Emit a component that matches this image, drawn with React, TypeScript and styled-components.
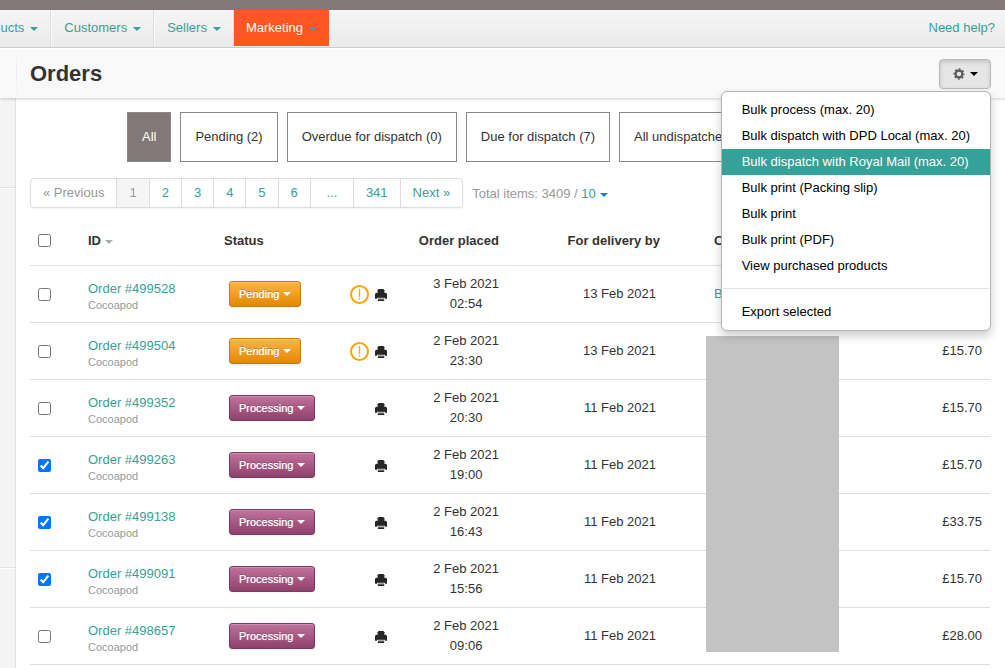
import React, { useState } from 'react';
import styled, { createGlobalStyle, css } from 'styled-components';

const teal = '#36a198';
const ink = '#333333';
const muted = '#999999';
const line = '#dddddd';

const GlobalStyle = createGlobalStyle`
  *, *::before, *::after { box-sizing: border-box; }
  body {
    margin: 0;
    background: #ffffff;
    color: ${ink};
    font-family: "Liberation Sans", Arial, sans-serif;
    font-size: 13px;
    line-height: 20px;
  }
  button { font: inherit; cursor: pointer; }
  a { color: ${teal}; text-decoration: none; }
`;

const Page = styled.div`
  display: flex;
  flex-direction: column;
  min-height: 100vh;
  overflow: hidden;
`;

const TopStrip = styled.div`
  height: 10px;
  background: #827878;
`;

const NavBar = styled.nav`
  display: flex;
  justify-content: space-between;
  height: 38px;
  border-bottom: 1px solid #d4d4d4;
  background: linear-gradient(#f5f5f5, #ebebeb);
`;

const NavList = styled.ul`
  display: flex;
  margin: 0 0 0 -40px;
  padding: 0 0 1px;
  list-style: none;
`;

const NavItem = styled.li<{ $active?: boolean }>`
  border-left: 1px solid #fafafa;
  border-right: 1px solid #dedede;
  ${(p) =>
    p.$active &&
    css`
      border-color: #ff5722;
      background: #ff5722;
    `}
`;

const NavLink = styled.a<{ $active?: boolean }>`
  display: flex;
  align-items: center;
  gap: 6px;
  height: 36px;
  padding: 0 ${(p) => (p.$active ? 11 : 12)}px;
  color: ${(p) => (p.$active ? '#ffffff' : teal)};
`;

const HelpLink = styled.a`
  padding: 8px 10px;
`;

const Caret = styled.span<{ $color: string }>`
  display: inline-block;
  border: 4px solid transparent;
  border-top-color: ${(p) => p.$color};
  border-bottom: 0;
  vertical-align: middle;
`;

const NavCaret = styled(Caret)`
  margin-top: 2px;
`;

const TitleBar = styled.header`
  position: relative;
  z-index: 2;
  display: flex;
  align-items: center;
  height: 50px;
  padding-right: 14px;
  border-top: 1px solid #ffffff;
  background: #f9f9f9;
  box-shadow: 0 1px 3px rgba(0, 0, 0, 0.2);
`;

const TitleGutter = styled.span`
  width: 17px;
  height: 100%;
  background: linear-gradient(#f9f9f9, #ebebeb 50%, #f9f9f9) right / 1px 100% no-repeat;
`;

const Title = styled.h1`
  flex: 1;
  margin: 0;
  padding-left: 13px;
  font-size: 22px;
  line-height: 30px;
`;

const MenuAnchor = styled.div`
  position: relative;
`;

const GearButton = styled.button`
  display: flex;
  align-items: center;
  justify-content: center;
  gap: 5px;
  width: 52px;
  height: 30px;
  border: 1px solid #bbbbbb;
  border-radius: 4px;
  background: #e6e6e6;
  box-shadow: inset 0 2px 4px rgba(0, 0, 0, 0.15), 0 1px 2px rgba(0, 0, 0, 0.05);
`;

const Menu = styled.ul`
  position: absolute;
  top: 100%;
  right: 0;
  margin: 2px 0 0;
  padding: 5px 0;
  border: 1px solid #b4b4b4;
  border-radius: 6px;
  background: #ffffff;
  box-shadow: 0 5px 10px rgba(0, 0, 0, 0.2);
  list-style: none;
`;

const MenuItem = styled.a<{ $active?: boolean }>`
  display: block;
  padding: 3px 20px;
  color: ${(p) => (p.$active ? '#ffffff' : '#000000')};
  background: ${(p) => (p.$active ? teal : 'transparent')};
  white-space: nowrap;
`;

const MenuDivider = styled.li`
  height: 1px;
  margin: 9px 1px 10px;
  background: #e5e5e5;
`;

const Body = styled.div`
  display: flex;
  flex: 1;
`;

const Sidebar = styled.aside`
  flex: none;
  width: 16px;
  border-right: 1px solid #e2e2e2;
  background: #f4f4f4;
`;

const SidebarBlock = styled.div<{ $height: number }>`
  height: ${(p) => p.$height}px;
  border-bottom: 1px solid #e4e4e4;
  box-shadow: 0 1px 0 #ffffff;
`;

const Main = styled.main`
  flex: 1;
  min-width: 0;
  padding: 14px 15px 0 14px;
`;

const Filters = styled.div`
  display: flex;
  gap: 9px;
  padding-left: 97px;
`;

const FilterButton = styled.button<{ $active?: boolean }>`
  flex: none;
  height: 50px;
  padding: 0 14px;
  border: 1px solid #888888;
  background: ${(p) => (p.$active ? '#827878' : '#ffffff')};
  color: ${(p) => (p.$active ? '#ffffff' : ink)};
`;

const PagerRow = styled.div`
  display: flex;
  gap: 9px;
  margin-top: 16px;
`;

const Pager = styled.ul`
  display: flex;
  margin: 0;
  padding: 0;
  border: 1px solid ${line};
  border-radius: 4px;
  box-shadow: 0 1px 2px rgba(0, 0, 0, 0.05);
  list-style: none;
`;

const PagerItem = styled.li`
  & + & {
    border-left: 1px solid ${line};
  }
`;

const PagerLink = styled.a<{ $quiet?: boolean; $current?: boolean }>`
  display: block;
  padding: 4px 12px;
  color: ${(p) => (p.$quiet || p.$current ? muted : teal)};
  background: ${(p) => (p.$current ? '#f5f5f5' : 'transparent')};
`;

const Totals = styled.div`
  padding-top: 6px;
  color: ${muted};
`;

const PlainButton = styled.button<{ $color: string }>`
  padding: 0;
  border: 0;
  background: none;
  color: ${(p) => p.$color};
  font-weight: inherit;

  ${Caret} {
    margin-left: 4px;
  }
`;

const Table = styled.table`
  width: 100%;
  margin-top: 7px;
  border-collapse: separate;
  border-spacing: 0;
  table-layout: fixed;
`;

const Col = styled.col<{ $width?: number }>`
  width: ${(p) => (p.$width ? `${p.$width}px` : 'auto')};
`;

type Align = 'left' | 'right';

const HeadCell = styled.th<{ $align?: Align; $end?: number }>`
  height: 51px;
  padding: 2px ${(p) => p.$end ?? 8}px 0 8px;
  border-bottom: 1px solid ${line};
  text-align: ${(p) => p.$align ?? 'left'};
  white-space: nowrap;
`;

const CheckHeadCell = styled(HeadCell)`
  padding-top: 0;
`;

const Cell = styled.td<{ $align?: Align; $end?: number }>`
  height: 57px;
  padding: 0 ${(p) => p.$end ?? 8}px 0 8px;
  border-bottom: 1px solid ${line};
  text-align: ${(p) => p.$align ?? 'left'};
  vertical-align: middle;
  white-space: nowrap;
`;

const OrderCell = styled(Cell)`
  padding-top: 5px;
`;

const IconCell = styled(Cell)`
  padding-top: 1px;
`;

const HiddenCell = styled.td`
  padding: 13px 0 12px;
  border-bottom: 1px solid ${line};
`;

const HiddenBlock = styled.div`
  height: 316px;
  background: #c3c3c3;
`;

const Check = styled.input`
  display: block;
  width: 13px;
  height: 13px;
  margin: 0;
`;

const OrderLink = styled.a`
  display: block;
  line-height: 16px;
`;

const Source = styled.div`
  color: ${muted};
  font-size: 11px;
  line-height: 16px;
`;

const StatusButton = styled.button<{ $pending: boolean }>`
  display: flex;
  align-items: center;
  gap: 4px;
  height: 26px;
  margin-left: 5px;
  padding: 0 9px;
  border: 1px solid ${(p) => (p.$pending ? '#c67c0c' : '#7d3a60')};
  border-radius: 3px;
  background: ${(p) =>
    p.$pending ? 'linear-gradient(#fdb44a, #e48800)' : 'linear-gradient(#c0739d, #8f406c)'};
  box-shadow: inset 0 1px 0 rgba(255, 255, 255, 0.2), 0 1px 2px rgba(0, 0, 0, 0.05);
  color: #ffffff;
  font-size: 11px;
  text-shadow: 0 0 1px rgba(255, 255, 255, 0.7), 0 -1px 0 rgba(0, 0, 0, 0.25);
`;

const Icons = styled.div`
  display: flex;
  align-items: center;
  justify-content: flex-end;
  gap: 6px;
`;

const Stamp = styled.div`
  display: inline-block;
  text-align: center;
`;

const CogIcon = () => (
  <svg width="12" height="12" viewBox="0 0 12 12" aria-hidden="true">
    <circle cx="6" cy="6" r="3.4" fill="none" stroke="#5a5a5a" strokeWidth="2.2" />
    <circle cx="6" cy="6" r="4.9" fill="none" stroke="#5a5a5a" strokeWidth="1.5" strokeDasharray="1.92 1.93" strokeDashoffset="0.96" />
  </svg>
);

const WarningIcon = () => (
  <svg width="19" height="19" viewBox="0 0 19 19" role="img" aria-label="Needs attention">
    <circle cx="9.5" cy="9.5" r="8.5" fill="none" stroke="#ffa500" strokeWidth="2" />
    <path d="M9.5 4v8M9.5 13v1.4" fill="none" stroke="#ffa500" strokeWidth="1.3" />
  </svg>
);

const PrinterIcon = () => (
  <svg width="12" height="12" viewBox="0 0 12 12" role="img" aria-label="Print">
    <path d="M3.6 0h4.8L9.4 1.2V4H2.6V1.2z" fill="#262626" />
    <path d="M0 5l1-1.2h1.2V4.4h7.6v-.6H11L12 5v4.8h-2V8.6H2v1.2H0z" fill="#262626" />
    <path d="M2 4h8v4.6H2z" fill="#262626" />
    <path d="M2.8 9.6h6.4V12H2.8z" fill="#262626" />
    <path d="M3 10.4h6" stroke="#aaa" strokeWidth=".5" />
  </svg>
);

const navItems = ['Products', 'Customers', 'Sellers', 'Marketing'];

const filters = ['All', 'Pending (2)', 'Overdue for dispatch (0)', 'Due for dispatch (7)', 'All undispatched (9)'];

const pages = ['« Previous', '1', '2', '3', '4', '5', '6', '\u00a0...\u00a0', '341', 'Next »'];

const menuItems = [
  'Bulk process (max. 20)',
  'Bulk dispatch with DPD Local (max. 20)',
  'Bulk dispatch with Royal Mail (max. 20)',
  'Bulk print (Packing slip)',
  'Bulk print',
  'Bulk print (PDF)',
  'View purchased products',
];

interface Order {
  id: string;
  status: 'Pending' | 'Processing';
  date: string;
  time: string;
  due: string;
  total: string;
}

const orders: Order[] = [
  { id: '499528', status: 'Pending', date: '3 Feb 2021', time: '02:54', due: '13 Feb 2021', total: '£15.70' },
  { id: '499504', status: 'Pending', date: '2 Feb 2021', time: '23:30', due: '13 Feb 2021', total: '£15.70' },
  { id: '499352', status: 'Processing', date: '2 Feb 2021', time: '20:30', due: '11 Feb 2021', total: '£15.70' },
  { id: '499263', status: 'Processing', date: '2 Feb 2021', time: '19:00', due: '11 Feb 2021', total: '£15.70' },
  { id: '499138', status: 'Processing', date: '2 Feb 2021', time: '16:43', due: '11 Feb 2021', total: '£33.75' },
  { id: '499091', status: 'Processing', date: '2 Feb 2021', time: '15:56', due: '11 Feb 2021', total: '£15.70' },
  { id: '498657', status: 'Processing', date: '2 Feb 2021', time: '09:06', due: '11 Feb 2021', total: '£28.00' },
];

export default function App() {
  const [menuOpen, setMenuOpen] = useState(true);
  const [filter, setFilter] = useState('All');
  const [selected, setSelected] = useState<string[]>(['499263', '499138', '499091']);

  const allSelected = selected.length === orders.length;
  const toggle = (id: string) =>
    setSelected((ids) => (ids.includes(id) ? ids.filter((x) => x !== id) : [...ids, id]));

  return (
    <Page>
      <GlobalStyle />
      <TopStrip />
      <NavBar>
        <NavList>
          {navItems.map((name) => {
            const active = name === 'Marketing';
            return (
              <NavItem key={name} $active={active}>
                <NavLink href="#" $active={active}>
                  {name}
                  <NavCaret $color={teal} />
                </NavLink>
              </NavItem>
            );
          })}
        </NavList>
        <HelpLink href="#">Need help?</HelpLink>
      </NavBar>

      <TitleBar>
        <TitleGutter />
        <Title>Orders</Title>
        <MenuAnchor>
          <GearButton aria-label="Bulk actions" aria-expanded={menuOpen} onClick={() => setMenuOpen(!menuOpen)}>
            <CogIcon />
            <Caret $color="#000000" />
          </GearButton>
          {menuOpen && (
            <Menu>
              {menuItems.map((name, i) => (
                <li key={name}>
                  <MenuItem href="#" $active={i === 2}>
                    {name}
                  </MenuItem>
                </li>
              ))}
              <MenuDivider role="separator" />
              <li>
                <MenuItem href="#">Export selected</MenuItem>
              </li>
            </Menu>
          )}
        </MenuAnchor>
      </TitleBar>

      <Body>
        <Sidebar>
          <SidebarBlock $height={90} />
          <SidebarBlock $height={380} />
        </Sidebar>
        <Main>
          <Filters>
            {filters.map((name) => (
              <FilterButton key={name} $active={name === filter} onClick={() => setFilter(name)}>
                {name}
              </FilterButton>
            ))}
          </Filters>

          <PagerRow>
            <Pager>
              {pages.map((label, i) => (
                <PagerItem key={label}>
                  <PagerLink href="#" $quiet={i === 0} $current={i === 1}>
                    {label}
                  </PagerLink>
                </PagerItem>
              ))}
            </Pager>
            <Totals>
              Total items: 3409 /{' '}
              <PlainButton $color={teal}>
                10
                <Caret $color="#0088cc" />
              </PlainButton>
            </Totals>
          </PagerRow>

          <Table>
            <colgroup>
              <Col $width={50} />
              <Col $width={136} />
              <Col $width={125} />
              <Col $width={54} />
              <Col $width={112} />
              <Col $width={199} />
              <Col $width={133} />
              <Col />
            </colgroup>
            <thead>
              <tr>
                <CheckHeadCell>
                  <Check
                    type="checkbox"
                    aria-label="Select all orders"
                    checked={allSelected}
                    onChange={() => setSelected(allSelected ? [] : orders.map((o) => o.id))}
                  />
                </CheckHeadCell>
                <HeadCell>
                  <PlainButton $color={ink}>
                    ID
                    <Caret $color="#aaaaaa" />
                  </PlainButton>
                </HeadCell>
                <HeadCell>Status</HeadCell>
                <HeadCell />
                <HeadCell $align="right">Order placed</HeadCell>
                <HeadCell $align="right" $end={46}>
                  For delivery by
                </HeadCell>
                <HeadCell>Customer</HeadCell>
                <HeadCell $align="right">Total</HeadCell>
              </tr>
            </thead>
            <tbody>
              {orders.map((order, i) => (
                <tr key={order.id}>
                  <Cell>
                    <Check
                      type="checkbox"
                      aria-label={`Select order ${order.id}`}
                      checked={selected.includes(order.id)}
                      onChange={() => toggle(order.id)}
                    />
                  </Cell>
                  <OrderCell>
                    <OrderLink href="#">Order #{order.id}</OrderLink>
                    <Source>Cocoapod</Source>
                  </OrderCell>
                  <Cell>
                    <StatusButton $pending={order.status === 'Pending'}>
                      {order.status}
                      <Caret $color="#ffffff" />
                    </StatusButton>
                  </Cell>
                  <IconCell>
                    <Icons>
                      {order.status === 'Pending' && <WarningIcon />}
                      <PrinterIcon />
                    </Icons>
                  </IconCell>
                  <Cell $align="right">
                    <Stamp>
                      {order.date}
                      <br />
                      {order.time}
                    </Stamp>
                  </Cell>
                  <Cell $align="right" $end={50}>
                    {order.due}
                  </Cell>
                  {i === 0 && (
                    <Cell>
                      <a href="#">B</a>
                    </Cell>
                  )}
                  {i === 1 && (
                    <HiddenCell rowSpan={orders.length - 1}>
                      <HiddenBlock />
                    </HiddenCell>
                  )}
                  <Cell $align="right">{order.total}</Cell>
                </tr>
              ))}
            </tbody>
          </Table>
        </Main>
      </Body>
    </Page>
  );
}
